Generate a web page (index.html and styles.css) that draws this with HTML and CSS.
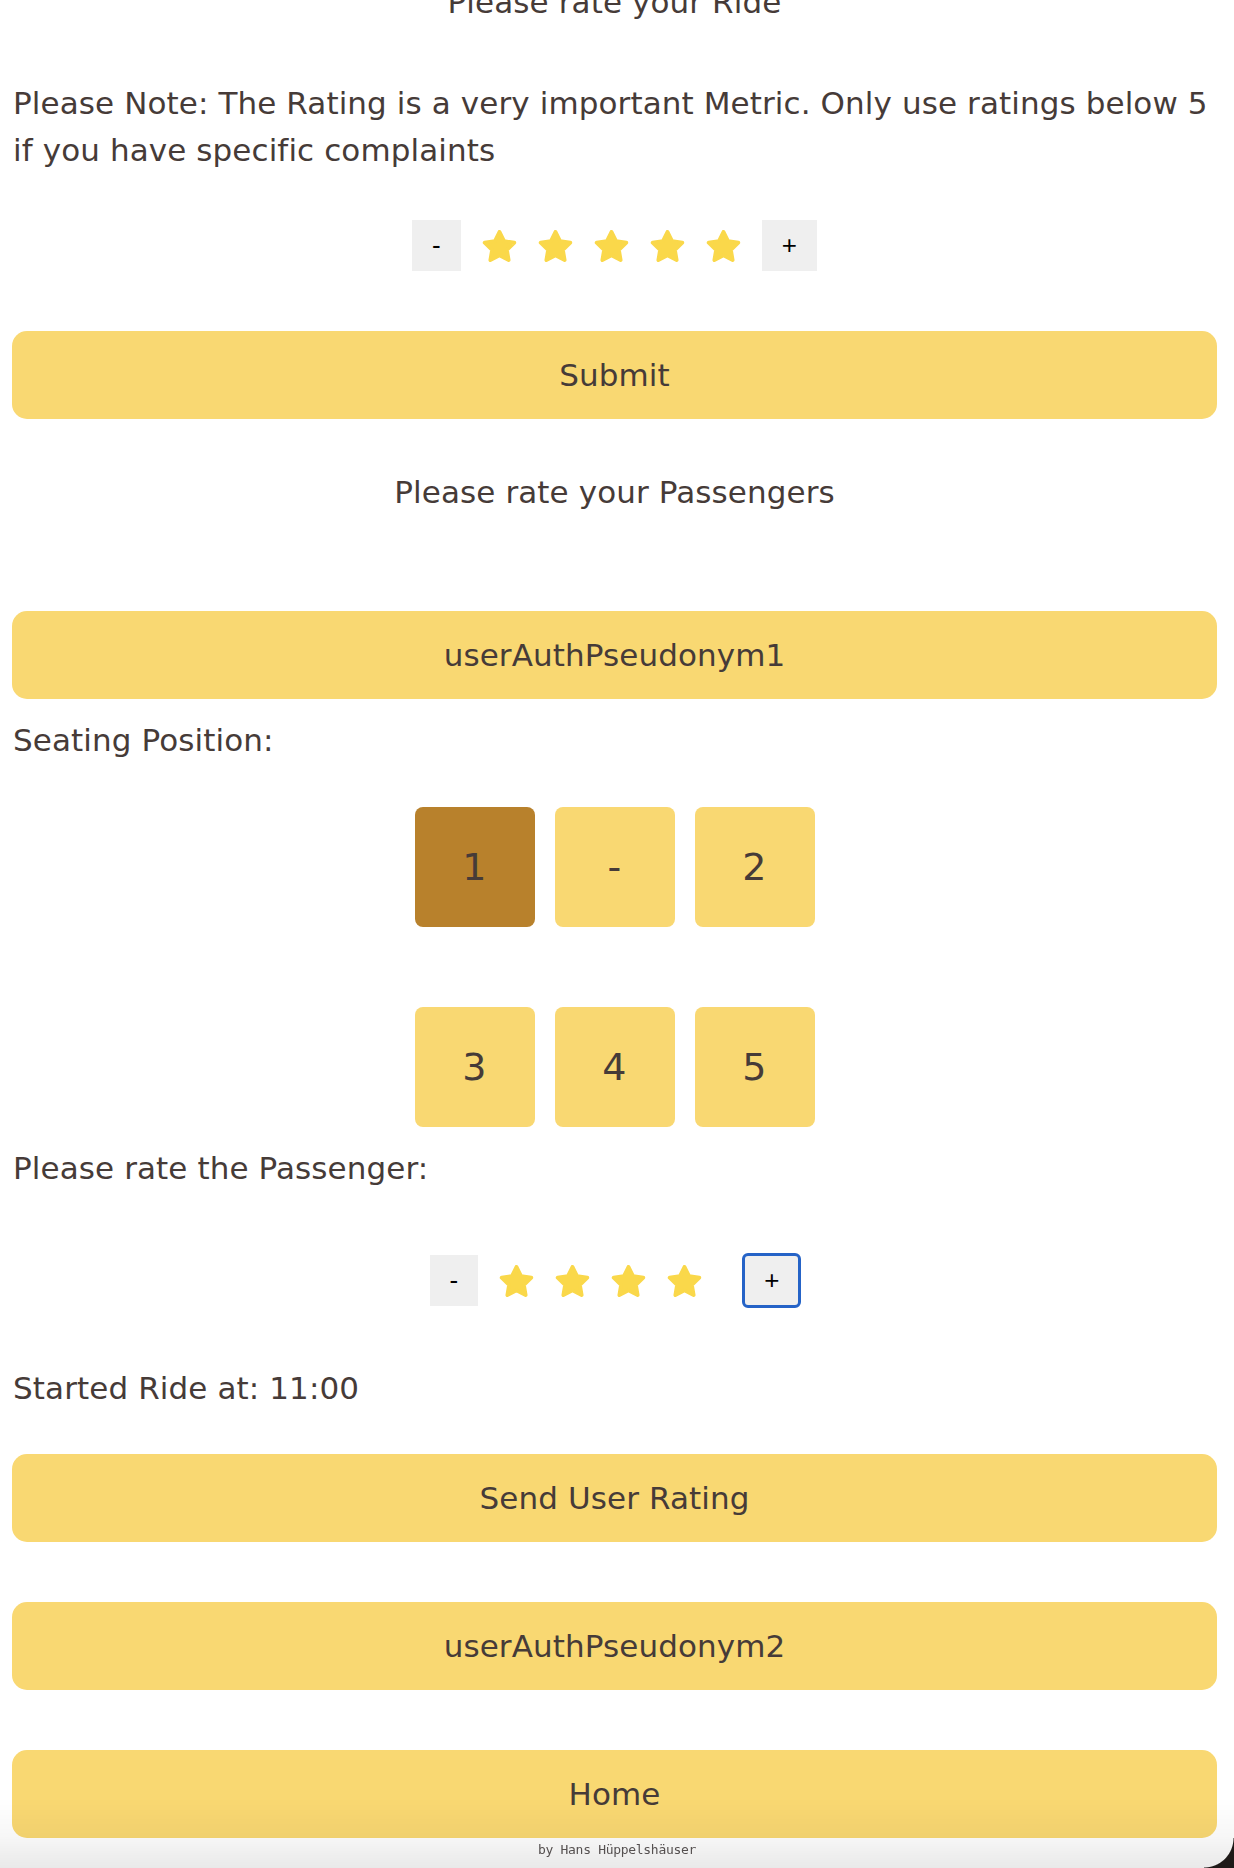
FILE: index.html
```html
<!DOCTYPE html>
<html lang="en">
<head>
<meta charset="utf-8">
<title>Rate your Ride</title>
<link rel="stylesheet" href="styles.css">
</head>
<body>
<main class="page">
  <h2 class="title">Please rate your Ride</h2>
  <p class="note">Please Note: The Rating is a very important Metric. Only use ratings below 5 if you have specific complaints</p>

  <div class="rating rating-ride">
    <button class="step">-</button>
    <svg class="star" viewBox="1.3 1.3 21.4 20.5"><path d="M12 2.5L14.94 8.45 21.51 9.41 16.76 14.05 17.88 20.59 12 17.5 6.12 20.59 7.24 14.05 2.49 9.41 9.06 8.45Z"/></svg>
    <svg class="star" viewBox="1.3 1.3 21.4 20.5"><path d="M12 2.5L14.94 8.45 21.51 9.41 16.76 14.05 17.88 20.59 12 17.5 6.12 20.59 7.24 14.05 2.49 9.41 9.06 8.45Z"/></svg>
    <svg class="star" viewBox="1.3 1.3 21.4 20.5"><path d="M12 2.5L14.94 8.45 21.51 9.41 16.76 14.05 17.88 20.59 12 17.5 6.12 20.59 7.24 14.05 2.49 9.41 9.06 8.45Z"/></svg>
    <svg class="star" viewBox="1.3 1.3 21.4 20.5"><path d="M12 2.5L14.94 8.45 21.51 9.41 16.76 14.05 17.88 20.59 12 17.5 6.12 20.59 7.24 14.05 2.49 9.41 9.06 8.45Z"/></svg>
    <svg class="star" viewBox="1.3 1.3 21.4 20.5"><path d="M12 2.5L14.94 8.45 21.51 9.41 16.76 14.05 17.88 20.59 12 17.5 6.12 20.59 7.24 14.05 2.49 9.41 9.06 8.45Z"/></svg>
    <button class="step">+</button>
  </div>

  <button class="wide submit">Submit</button>

  <h2 class="subtitle">Please rate your Passengers</h2>

  <button class="wide user1">userAuthPseudonym1</button>

  <p class="label seat-label">Seating Position:</p>

  <div class="seats">
    <div class="seat selected">1</div>
    <div class="seat">-</div>
    <div class="seat">2</div>
    <div class="seat">3</div>
    <div class="seat">4</div>
    <div class="seat">5</div>
  </div>

  <p class="label pass-label">Please rate the Passenger:</p>

  <div class="rating rating-pass">
    <button class="step">-</button>
    <svg class="star" viewBox="1.3 1.3 21.4 20.5"><path d="M12 2.5L14.94 8.45 21.51 9.41 16.76 14.05 17.88 20.59 12 17.5 6.12 20.59 7.24 14.05 2.49 9.41 9.06 8.45Z"/></svg>
    <svg class="star" viewBox="1.3 1.3 21.4 20.5"><path d="M12 2.5L14.94 8.45 21.51 9.41 16.76 14.05 17.88 20.59 12 17.5 6.12 20.59 7.24 14.05 2.49 9.41 9.06 8.45Z"/></svg>
    <svg class="star" viewBox="1.3 1.3 21.4 20.5"><path d="M12 2.5L14.94 8.45 21.51 9.41 16.76 14.05 17.88 20.59 12 17.5 6.12 20.59 7.24 14.05 2.49 9.41 9.06 8.45Z"/></svg>
    <svg class="star" viewBox="1.3 1.3 21.4 20.5"><path d="M12 2.5L14.94 8.45 21.51 9.41 16.76 14.05 17.88 20.59 12 17.5 6.12 20.59 7.24 14.05 2.49 9.41 9.06 8.45Z"/></svg>
    <span class="slot"></span>
    <button class="step focused">+</button>
  </div>

  <p class="label started">Started Ride at: 11:00</p>

  <button class="wide send">Send User Rating</button>
  <button class="wide user2">userAuthPseudonym2</button>
  <button class="wide home">Home</button>
</main>
<footer class="footer">by Hans Hüppelshäuser</footer>
<div class="corner"></div>
</body>
</html>
```

FILE: styles.css
```css
html, body {
  margin: 0;
  padding: 0;
  background: #ffffff;
}

body {
  font-family: "DejaVu Sans", "Open Sans", sans-serif;
  color: #463b38;
  font-size: 31px;
  line-height: 47px;
  letter-spacing: 0.1px;
}

.page {
  display: flex;
  flex-direction: column;
  padding: 0 17px 60px 12px;
}

.title,
.subtitle {
  font-size: 31px;
  font-weight: 400;
  line-height: 47px;
  text-align: center;
  margin: 0;
}

.title {
  margin-top: -21px;
}

.note {
  margin: 54px 0 0 1px;
}

.rating {
  display: flex;
  justify-content: center;
  align-items: center;
  gap: 21px;
  height: 51px;
}

.rating-ride {
  margin-top: 46px;
}

.rating-pass {
  margin-top: 63px;
}

.step {
  height: 51px;
  padding: 0 20px;
  border: none;
  border-radius: 0;
  background: #efefef;
  color: #000000;
  font-family: "Liberation Sans", Arial, sans-serif;
  font-size: 26px;
  line-height: 51px;
  letter-spacing: 0;
}

.step.focused {
  border-radius: 4px;
  outline: 3px solid #2563c7;
  outline-offset: -1px;
}

.star {
  width: 35px;
  height: 32px;
  fill: #fad84a;
  stroke: #fad84a;
  stroke-width: 2.4;
  stroke-linejoin: round;
}

.slot {
  width: 0;
  height: 32px;
}

.wide {
  display: block;
  width: 100%;
  height: 88px;
  border: none;
  border-radius: 15px;
  background: #f9d872;
  color: #463b38;
  font-family: "DejaVu Sans", "Open Sans", sans-serif;
  font-size: 31px;
  letter-spacing: 0.1px;
  padding: 0;
}

.submit {
  margin-top: 60px;
}

.subtitle {
  margin-top: 50px;
}

.user1 {
  margin-top: 95px;
}

.label {
  margin: 0 0 0 1px;
}

.seat-label {
  margin-top: 18px;
}

.seats {
  display: grid;
  grid-template-columns: repeat(3, 120px);
  grid-auto-rows: 120px;
  gap: 80px 20px;
  justify-content: center;
  margin-top: 43px;
}

.seat {
  display: flex;
  align-items: center;
  justify-content: center;
  border-radius: 8px;
  background: #f9d872;
  font-size: 38px;
}

.seat.selected {
  background: #b8812c;
}

.pass-label {
  margin-top: 18px;
}

.started {
  margin-top: 59px;
}

.send {
  margin-top: 42px;
}

.user2 {
  margin-top: 60px;
}

.home {
  margin-top: 60px;
}

.footer {
  position: fixed;
  left: 0;
  right: 0;
  bottom: 0;
  height: 70px;
  box-sizing: border-box;
  padding-bottom: 10px;
  display: flex;
  align-items: flex-end;
  justify-content: center;
  background: linear-gradient(to bottom, rgba(0, 0, 0, 0) 0%, rgba(0, 0, 0, 0.03) 54%, rgba(0, 0, 0, 0.085) 100%);
  font-family: "DejaVu Sans Mono", monospace;
  font-size: 13px;
  line-height: 16px;
  letter-spacing: -0.3px;
  color: #555050;
}

.corner {
  position: fixed;
  right: 0;
  bottom: 0;
  width: 30px;
  height: 30px;
  background: radial-gradient(circle at 0 0, rgba(0, 0, 0, 0) 29px, #1e1a18 30px);
}
```
